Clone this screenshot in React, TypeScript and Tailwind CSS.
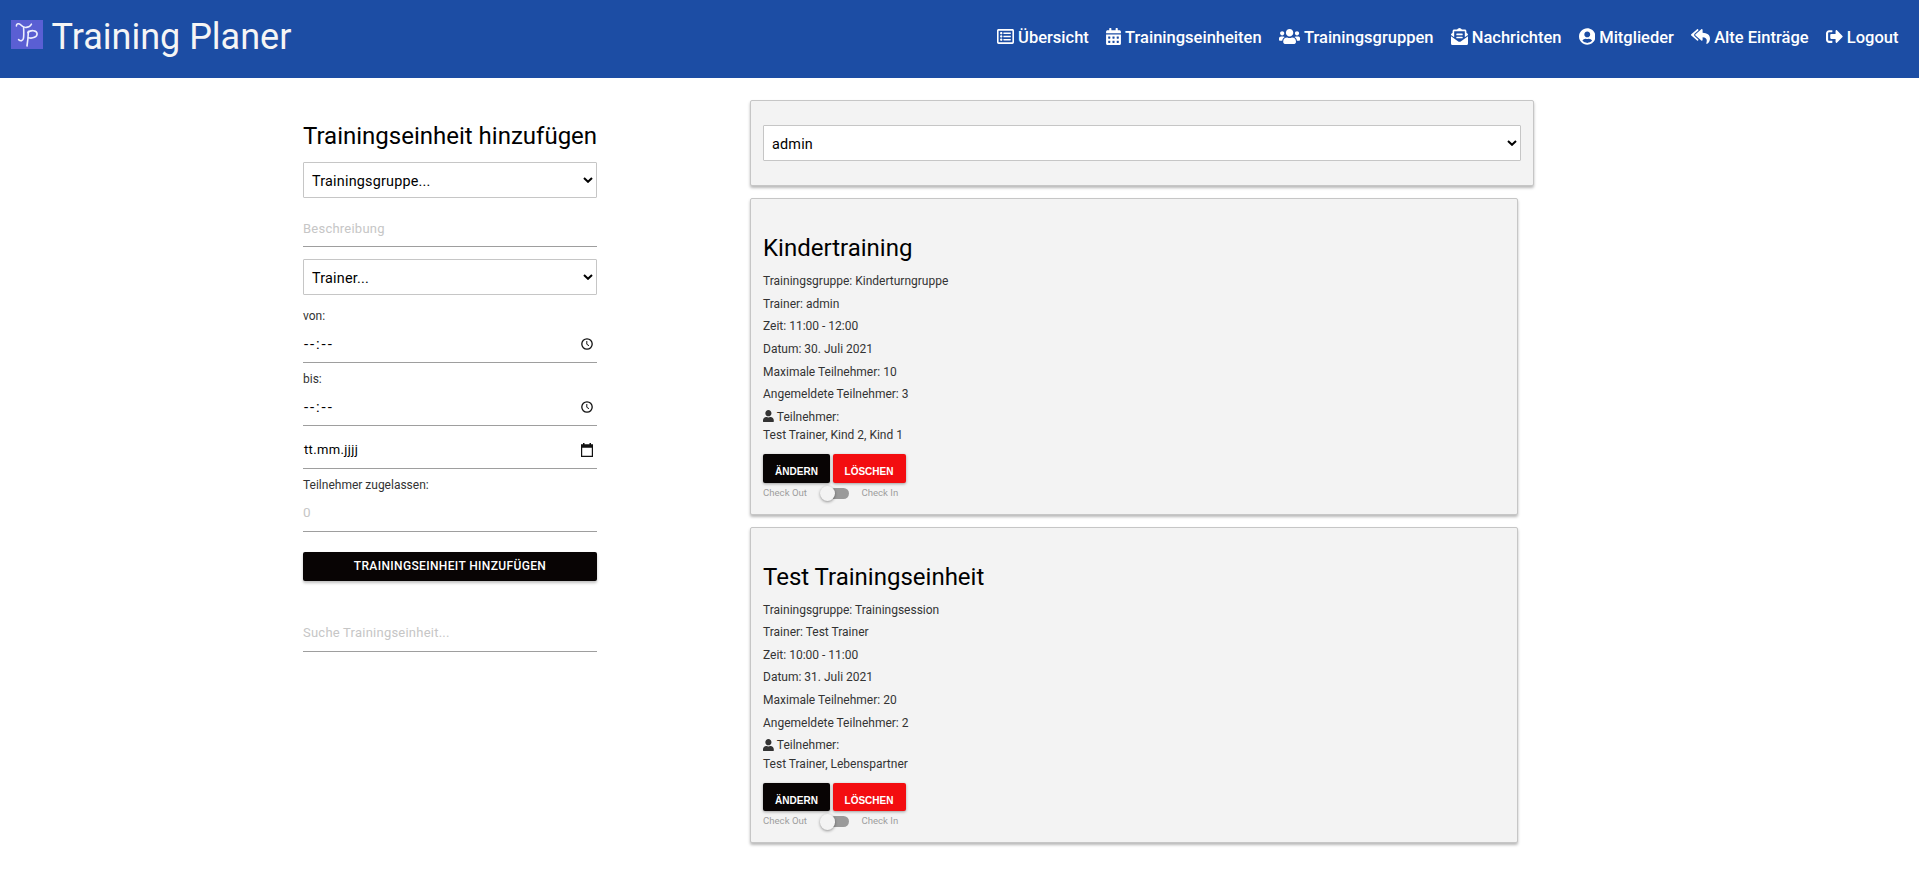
import React from "react";
import type { IconType } from "react-icons";
import {
  FaRegListAlt,
  FaCalendarAlt,
  FaUsers,
  FaEnvelopeOpenText,
  FaUserCircle,
  FaReplyAll,
  FaSignOutAlt,
  FaUser,
} from "react-icons/fa";

const navItems: { label: string; Icon: IconType; size: string }[] = [
  { label: "Übersicht", Icon: FaRegListAlt, size: "w-[17px]" },
  { label: "Trainingseinheiten", Icon: FaCalendarAlt, size: "w-[15px]" },
  { label: "Trainingsgruppen", Icon: FaUsers, size: "w-[21.2px]" },
  { label: "Nachrichten", Icon: FaEnvelopeOpenText, size: "w-[17px]" },
  { label: "Mitglieder", Icon: FaUserCircle, size: "w-[16.5px]" },
  { label: "Alte Einträge", Icon: FaReplyAll, size: "w-[19px]" },
  { label: "Logout", Icon: FaSignOutAlt, size: "w-[17px]" },
];

const sessions = [
  {
    title: "Kindertraining",
    details: [
      "Trainingsgruppe: Kinderturngruppe",
      "Trainer: admin",
      "Zeit: 11:00 - 12:00",
      "Datum: 30. Juli 2021",
      "Maximale Teilnehmer: 10",
      "Angemeldete Teilnehmer: 3",
    ],
    participants: "Test Trainer, Kind 2, Kind 1",
  },
  {
    title: "Test Trainingseinheit",
    details: [
      "Trainingsgruppe: Trainingsession",
      "Trainer: Test Trainer",
      "Zeit: 10:00 - 11:00",
      "Datum: 31. Juli 2021",
      "Maximale Teilnehmer: 20",
      "Angemeldete Teilnehmer: 2",
    ],
    participants: "Test Trainer, Lebenspartner",
  },
];

function Logo() {
  return (
    <svg viewBox="0 0 32 29" className="mt-[4px] h-[29px] w-[32px] shrink-0">
      <rect width="32" height="29" fill="#5a5fd3" />
      <g fill="none" stroke="#eceefd" strokeWidth="1.6" strokeLinecap="round" strokeLinejoin="round">
        <path d="M5.400 6C5.200 3.400 8 3 9.600 4.800c1.600 1.800 3.400 3 5.800 2.600 2.400-.4 4.200-1.400 5-3.200" />
        <path d="M12.600 7.600c.2 4 .4 7.200-.1 10.600-.4 2.800-3 3.200-4.900 1.400" />
        <path d="M17.400 11.400c-.2 4.800-.6 9.600-1.400 14.600" />
        <path d="M16.900 12.600c2.400-2.800 8.900-2.600 9.200 1 .2 3.400-4.300 5.200-8.600 4.200" />
      </g>
    </svg>
  );
}

function Select({ value }: { value: string }) {
  return (
    <div className="flex h-9 items-center justify-between rounded-[1px] border border-[#c6c6c6] bg-white pr-[3px] pl-2">
      <span className="pt-[3px] text-[14.4px] leading-5 tracking-[0.2px] text-black">{value}</span>
      <svg viewBox="0 0 10 6" className="h-[6px] w-[10px]">
        <path d="M1 1l4 3.800L9 1" fill="none" stroke="#000" strokeWidth="2" />
      </svg>
    </div>
  );
}

function Field({ children, className = "" }: { children: React.ReactNode; className?: string }) {
  return (
    <div className={`flex h-[37px] items-center justify-between border-b border-[#9e9e9e] text-[13px] ${className}`}>
      {children}
    </div>
  );
}

function EmptyTime() {
  return (
    <>
      <span className="pl-px text-[15px] tracking-[1.9px]">--:--</span>
      <svg viewBox="0 0 12 12" className="mr-[4px] size-[12px]" fill="none" stroke="#111">
        <circle cx="6" cy="6" r="5.200" strokeWidth="1.300" />
        <path d="M5.800 3v3.300l2.200 1.400" strokeWidth="1" />
      </svg>
    </>
  );
}

function CalendarIcon() {
  return (
    <svg viewBox="0 0 12 14" className="mr-1 h-[14px] w-[12px]">
      <path d="M2 0h1.500v1.200h5V0H10v1.200h2V14H0V1.200h2zM1.200 4.800v8h9.600v-8z" fill="#111" fillRule="evenodd" />
    </svg>
  );
}

function SessionCard({ title, details, participants }: (typeof sessions)[number]) {
  return (
    <section className="mt-3 h-[316.6px] w-[768px] rounded-[2px] border border-[#c6c6c6] bg-[#f3f3f3] px-3 pt-[33px] shadow-[0_2px_3px_rgba(0,0,0,0.28)]">
      <h2 className="mb-[6px] text-2xl leading-8 text-black">{title}</h2>
      <div className="text-xs text-[#333]">
        {details.map((line) => (
          <p key={line} className="leading-[22.62px]">
            {line}
          </p>
        ))}
        <p className="flex items-center gap-[3px] leading-[22.4px]">
          <FaUser className="mb-[1.500px] h-[12.500px] w-[10.800px]" preserveAspectRatio="none" />
          Teilnehmer:
        </p>
        <p className="leading-[15.800px]">{participants}</p>
      </div>
      <div className="mt-[10.1px] flex gap-[3px] font-['Liberation_Sans',sans-serif] text-[10px] font-bold text-white">
        <button className="h-[28.8px] w-[67px] rounded-[2px] bg-[#080404] pt-[6px] shadow-[0_1px_3px_rgba(0,0,0,0.35)]">
          ÄNDERN
        </button>
        <button className="h-[28.8px] w-[73px] rounded-[2px] bg-[#f30d10] pt-[6px] pr-px shadow-[0_1px_3px_rgba(0,0,0,0.35)]">
          LÖSCHEN
        </button>
      </div>
      <div className="flex h-5 items-center text-[9.6px] text-[#9e9e9e]">
        <span>Check Out</span>
        <span className="relative mt-px mr-[12.500px] ml-[14px] h-[11px] w-[28px] rounded-full bg-[#9a9a9a]">
          <span className="absolute top-[-2px] left-[-1px] size-[15.500px] rounded-full bg-[#f3f3f3] shadow-[0_1px_3px_rgba(0,0,0,0.4)]" />
        </span>
        <span>Check In</span>
      </div>
    </section>
  );
}

export default function App() {
  return (
    <div className="min-h-[878px] bg-white font-[Roboto,sans-serif]">
      <header className="flex h-[78px] items-start justify-between bg-[#1c4da4] pt-4 pr-[20.500px] pl-[11px] text-white">
        <div className="flex items-start gap-[8.500px]">
          <Logo />
          <span className="text-4xl leading-[42px] text-[#f5f5f5]">Training Planer</span>
        </div>
        <nav className="mt-[9.500px] flex gap-[17.250px] text-[16.5px] leading-6 font-medium">
          {navItems.map(({ label, Icon, size }) => (
            <a key={label} className="flex items-center gap-1">
              <Icon className={`mb-[1.500px] h-[17px] ${size}`} />
              {label}
            </a>
          ))}
        </nav>
      </header>

      <main className="flex items-start">
        <form className="ml-[303px] w-[294px] pt-[42px]">
          <h2 className="mb-2.5 text-2xl leading-8 whitespace-nowrap text-black">Trainingseinheit hinzufügen</h2>
          <Select value="Trainingsgruppe..." />
          <Field className="my-3 pt-px text-[#c6c6c6]">
            <span className="tracking-[0.23px]">Beschreibung</span>
          </Field>
          <Select value="Trainer..." />
          <p className="mt-[11px] text-xs leading-5 text-[#333]">von:</p>
          <Field>
            <EmptyTime />
          </Field>
          <p className="mt-[6px] text-xs leading-5 text-[#333]">bis:</p>
          <Field>
            <EmptyTime />
          </Field>
          <Field className="mt-1.5">
            <span className="pl-px tracking-[0.35px]">tt.mm.jjjj</span>
            <CalendarIcon />
          </Field>
          <p className="mt-1.5 text-xs leading-5 text-[#333]">Teilnehmer zugelassen:</p>
          <Field className="pb-px text-[#c6c6c6]">
            <span className="text-[13.500px]">0</span>
          </Field>
          <button
            type="button"
            className="mt-5 block h-[29px] w-full rounded-[2px] bg-[#080404] pb-[2px] text-xs font-medium tracking-[0.36px] text-white shadow-[0_2px_3px_rgba(0,0,0,0.25)]"
          >
            TRAININGSEINHEIT HINZUFÜGEN
          </button>
          <Field className="mt-[34px] text-[#c6c6c6]">
            <span className="tracking-[0.23px]">Suche Trainingseinheit...</span>
          </Field>
        </form>

        <div className="ml-[153px] pt-[22px]">
          <section className="w-[784px] rounded-[2px] border border-[#c6c6c6] bg-[#f3f3f3] px-3 py-6 shadow-[0_2px_3px_rgba(0,0,0,0.28)]">
            <Select value="admin" />
          </section>
          {sessions.map((session) => (
            <SessionCard key={session.title} {...session} />
          ))}
        </div>
      </main>
    </div>
  );
}
